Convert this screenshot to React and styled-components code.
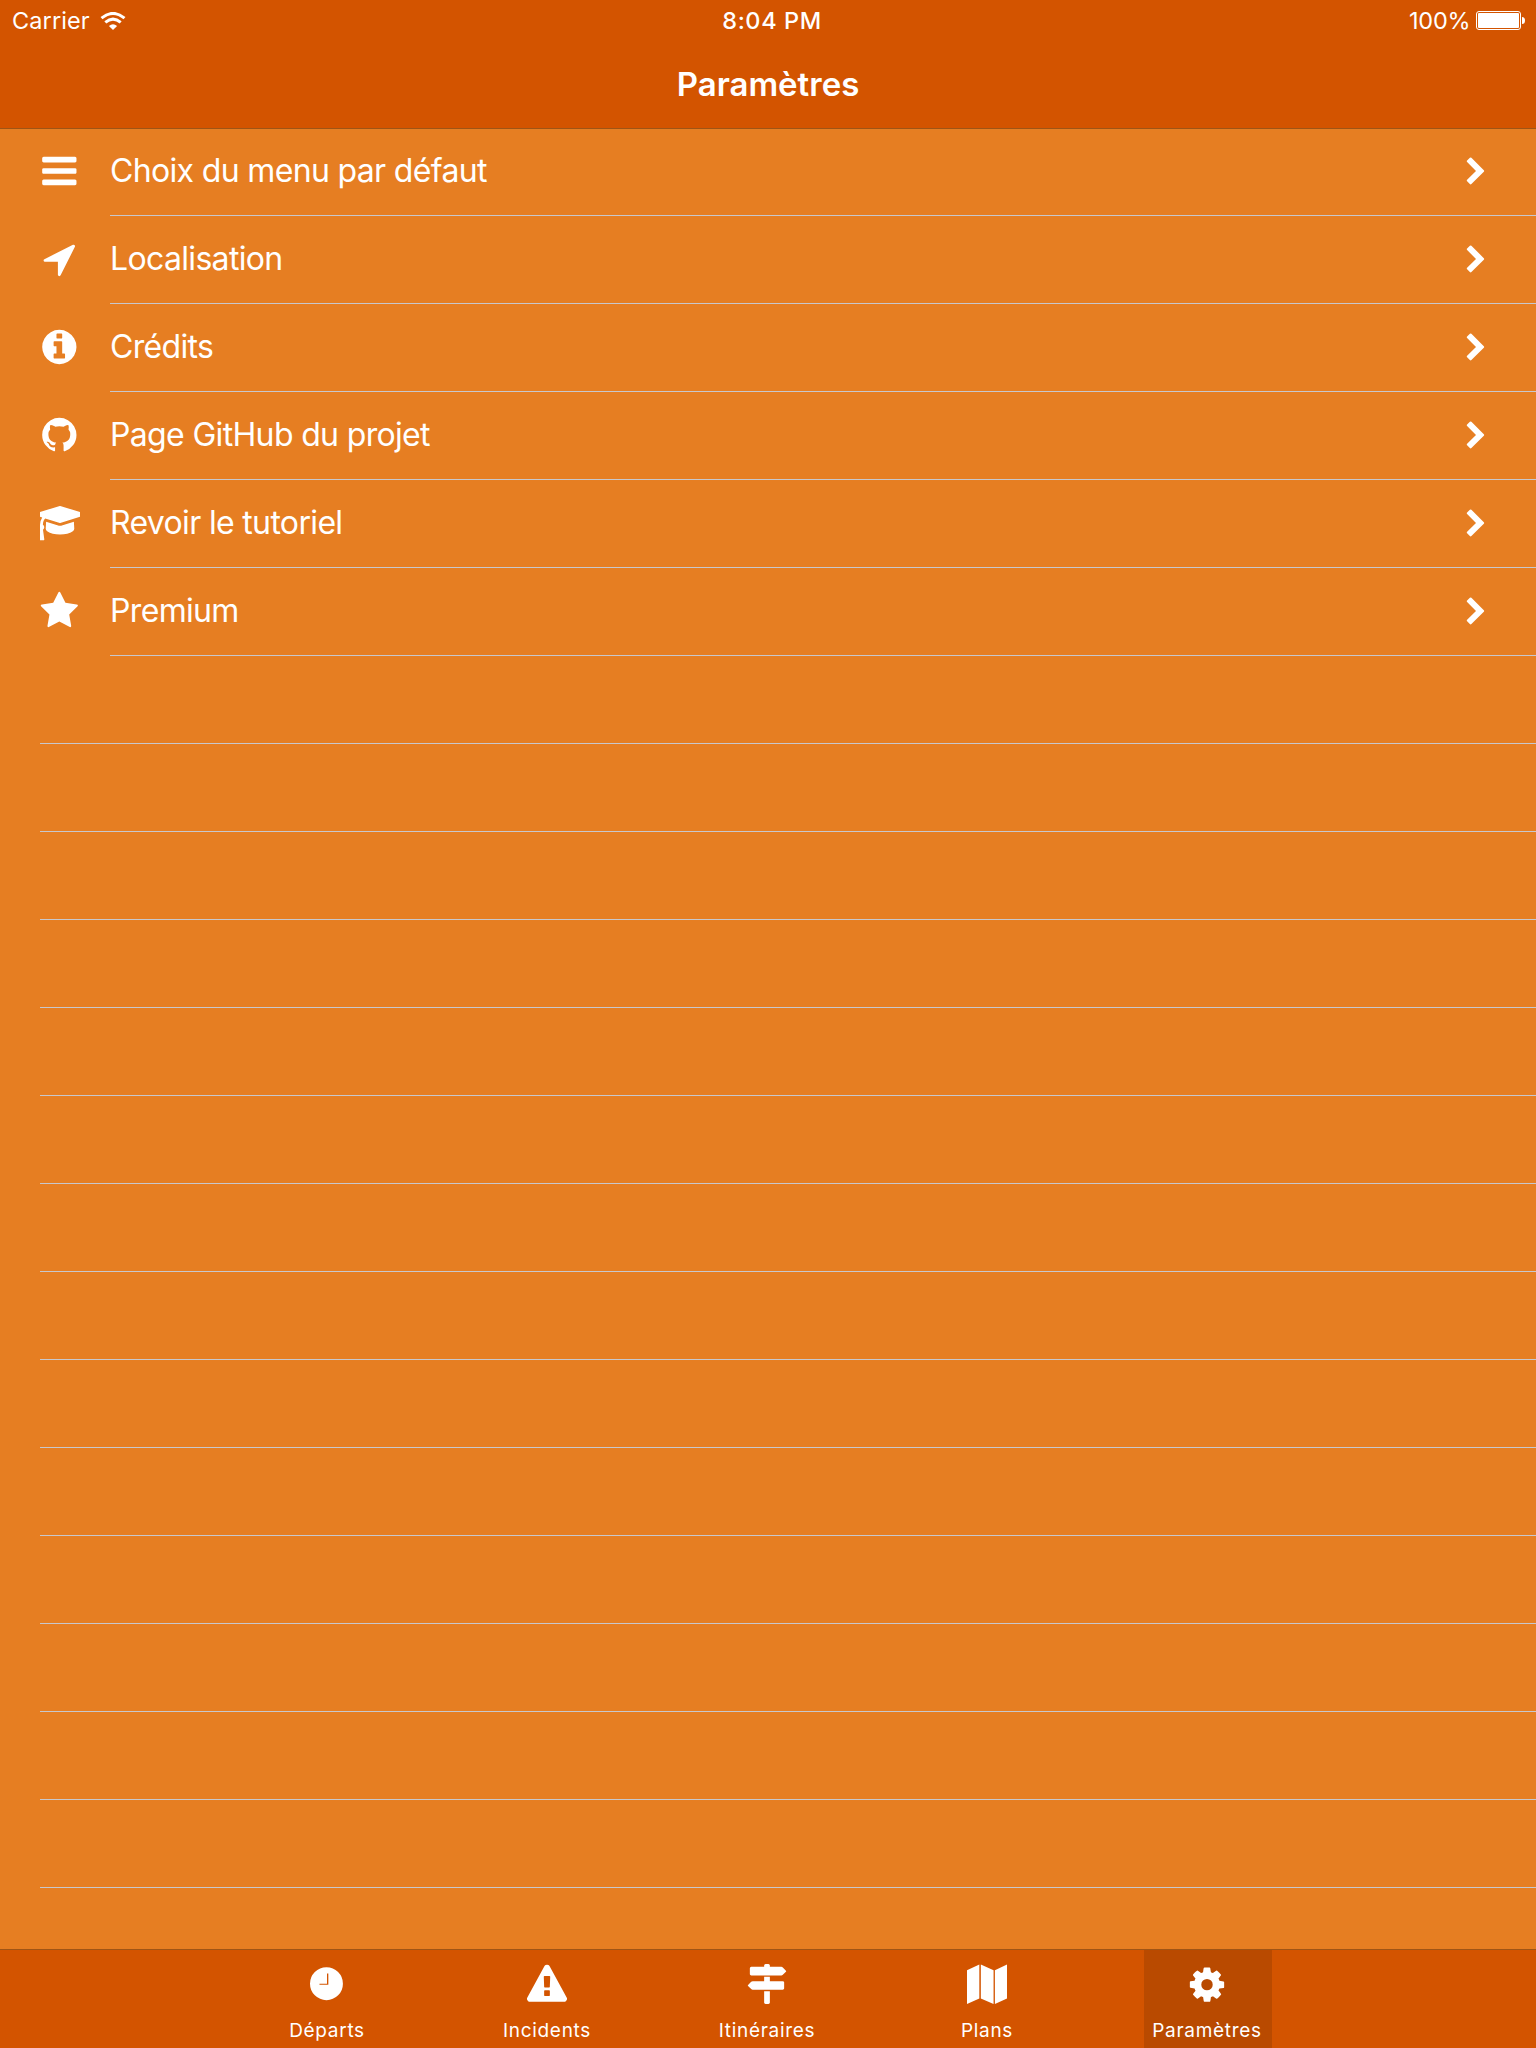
import React from "react";
import styled, { createGlobalStyle } from "styled-components";

const GlobalStyle = createGlobalStyle`
  * { box-sizing: border-box; }
  body { margin: 0; background: #e67e22; font-family: Inter, "Open Sans", "Liberation Sans", sans-serif; color: #fff; }
`;

const ICONS = {
  bars: "M1664 1344v128q0 26-19 45t-45 19h-1408q-26 0-45-19t-19-45v-128q0-26 19-45t45-19h1408q26 0 45 19t19 45zm0-512v128q0 26-19 45t-45 19h-1408q-26 0-45-19t-19-45v-128q0-26 19-45t45-19h1408q26 0 45 19t19 45zm0-512v128q0 26-19 45t-45 19h-1408q-26 0-45-19t-19-45v-128q0-26 19-45t45-19h1408q26 0 45 19t19 45z",
  arrow: "M1593 349l-640 1280q-17 35-57 35-5 0-15-2-22-5-35.5-22.5t-13.5-39.5v-576h-576q-22 0-39.5-13.5t-22.5-35.5 4-42 29-30l1280-640q13-7 29-7 27 0 45 19 15 14 18.5 34.5t-6.5 39.5z",
  info: "M1152 1376v-160q0-14-9-23t-23-9h-96v-512q0-14-9-23t-23-9h-320q-14 0-23 9t-9 23v160q0 14 9 23t23 9h96v320h-96q-14 0-23 9t-9 23v160q0 14 9 23t23 9h448q14 0 23-9t9-23zm-128-896v-160q0-14-9-23t-23-9h-192q-14 0-23 9t-9 23v160q0 14 9 23t23 9h192q14 0 23-9t9-23zm640 416q0 209-103 385.5t-279.5 279.5-385.5 103-385.5-103-279.5-279.5-103-385.5 103-385.5 279.5-279.5 385.5-103 385.5 103 279.5 279.5 103 385.5z",
  github: "M896 128q209 0 385.5 103t279.5 279.5 103 385.5q0 251-146.5 451.5t-378.5 277.5q-27 5-40-7t-13-30q0-3 .5-76.5t.5-134.5q0-97-52-142 57-6 102.5-18t94-39 81-66.5 53-105 20.5-150.5q0-119-79-206 37-91-8-204-28-9-81 11t-92 44l-38 24q-93-26-192-26t-192 26q-16-11-42.5-27t-83.5-38.5-85-13.5q-45 113-8 204-79 87-79 206 0 85 20.5 150t52.5 105 80.5 67 94 39 102.5 18q-39 36-49 103-21 10-45 15t-57 5-65.5-21.5-55.5-62.5q-19-32-48.5-52t-49.5-24l-20-3q-21 0-29 4.5t-5 11.5 9 14 13 12l7 5q22 10 43.5 38t31.5 51l10 23q13 38 44 61.5t67 30 69.5 7 55.5-3.5l23-4q0 38 .5 88.5t.5 54.5q0 18-13 30t-40 7q-232-77-378.5-277.5t-146.5-451.5q0-209 103-385.5t279.5-279.5 385.5-103z",
  cap: "M1774 836l18 316q4 69-82 128t-235 93.5-323 34.5-323-34.5-235-93.5-82-128l18-316 574 181q22 7 48 7t48-7zm530-324q0 23-22 31l-1120 352q-4 1-10 1t-10-1l-652-206q-43 34-71 111.5t-34 178.5q63 36 63 109 0 69-58 107l58 433q2 14-8 25-9 11-24 11h-192q-15 0-24-11-10-11-8-25l58-433q-58-38-58-107 0-73 65-111 11-207 98-330l-333-104q-22-8-22-31t22-31l1120-352q4-1 10-1t10 1l1120 352q22 8 22 31z",
  star: "M1728 647q0 22-26 48l-363 354 86 500q1 7 1 20 0 21-10.5 35.5t-30.5 14.5q-19 0-40-12l-449-236-449 236q-22 12-40 12-21 0-31.5-14.5t-10.5-35.5q0-6 2-20l86-500-364-354q-25-27-25-48 0-37 56-46l502-73 225-455q19-41 49-41t49 41l225 455 502 73q56 9 56 46z",
  chevron: "M1363 877l-742 742q-19 19-45 19t-45-19l-166-166q-19-19-19-45t19-45l531-531-531-531q-19-19-19-45t19-45l166-166q19-19 45-19t45 19l742 742q19 19 19 45t-19 45z",
  clock: "M872 145a737 737 0 1 0 0 1474a737 737 0 1 0 0-1474zm24 276h60v512h-397v-50h337z",
  warning: "M1024 1375v-190q0-14-9.5-23.5t-22.5-9.5h-192q-13 0-22.5 9.5t-9.5 23.5v190q0 14 9.5 23.5t22.5 9.5h192q13 0 22.5-9.5t9.5-23.5zm-2-374l18-459q0-12-10-19-13-11-24-11h-220q-11 0-24 11-10 7-10 21l17 457q0 10 10 16.5t24 6.5h185q14 0 23.5-6.5t10.5-16.5zm-14-934l768 1408q35 63-2 126-17 29-46.5 46t-63.5 17h-1536q-34 0-63.5-17t-46.5-46q-37-63-2-126l768-1408q17-31 47-49t65-18 65 18 47 49z",
  signs: "M1745 297q10 10 10 23t-10 23l-141 141q-28 28-68 28h-1344q-26 0-45-19t-19-45v-256q0-26 19-45t45-19h576v-64q0-26 19-45t45-19h128q26 0 45 19t19 45v64h512q40 0 68 28zm-977 919h256v512q0 26-19 45t-45 19h-128q-26 0-45-19t-19-45v-512zm832-448q26 0 45 19t19 45v256q0 26-19 45t-45 19h-1344q-40 0-68-28l-141-141q-10-10-10-23t10-23l141-141q28-28 68-28h512v-192h256v192h576z",
  map: "M0 280L552 20V1540L0 1792zM620 20L1190 280V1792L620 1540zM1250 280L1792 20V1540L1250 1792z",
  cog: "M1152 896q0-106-75-181t-181-75-181 75-75 181 75 181 181 75 181-75 75-181zm512-109v222q0 12-8 23t-20 13l-185 28q-19 54-39 91 35 50 107 138 10 12 10 25t-9 23q-27 37-99 108t-94 71q-12 0-26-9l-138-108q-44 23-91 38-16 136-29 186-7 28-36 28h-222q-14 0-24.5-8.5t-11.5-21.5l-28-184q-49-16-90-37l-141 107q-10 9-25 9-14 0-25-11-126-114-165-168-7-10-7-23 0-12 8-23 15-21 51-66.5t54-70.5q-27-50-41-99l-183-27q-13-2-21-12.5t-8-23.5v-222q0-12 8-23t19-13l186-28q14-46 39-92-40-57-107-138-10-12-10-24 0-10 9-23 26-36 98.5-107.5t94.5-71.5q13 0 26 10l138 107q44-23 91-38 16-136 29-186 7-28 36-28h222q14 0 24.5 8.5t11.5 21.5l28 184q49 16 90 37l142-107q9-9 24-9 13 0 25 10 129 119 165 170 7 8 7 22 0 12-8 23-15 21-51 66.5t-54 70.5q26 50 41 98l183 28q13 2 21 12.5t8 23.5z",
};

const Svg = styled.svg`
  display: block;
  flex: none;
  width: ${(p) => p.$size}px;
  height: ${(p) => p.$size}px;
  fill: #fff;
`;

function Icon({ name, size = 40, offset = 0, rise = 0 }) {
  return (
    <Svg $size={size} viewBox={`${offset} ${rise} 1792 1792`} aria-hidden="true">
      <path fillRule="evenodd" d={ICONS[name]} />
    </Svg>
  );
}

const Screen = styled.div`
  display: flex;
  flex-direction: column;
  width: 1536px;
  height: 2048px;
  overflow: hidden;
  background: #e67e22;
`;

const Header = styled.header`
  flex: none;
  height: 129px;
  background: #d35400;
  border-bottom: 1px solid #9f5415;
`;

const StatusBar = styled.div`
  display: grid;
  grid-template-columns: 1fr auto 1fr;
  align-items: center;
  height: 40px;
  padding: 2px 10px 0 12px;
  font-size: 23.5px;
  line-height: 38px;
`;

const Carrier = styled.div`
  display: flex;
  align-items: center;
  gap: 10px;
  letter-spacing: 0.1px;
`;

const Clock = styled.div`
  font-weight: 500;
  letter-spacing: 0.6px;
  padding-left: 6px;
`;

const Power = styled.div`
  display: flex;
  justify-content: flex-end;
  align-items: center;
  gap: 5.5px;
  letter-spacing: -0.2px;
`;

const Wifi = styled.svg`
  display: block;
  width: 26px;
  height: 19px;
`;

const Battery = styled.svg`
  display: block;
  width: 50px;
  height: 20px;
`;

const Title = styled.h1`
  margin: 0;
  height: 88px;
  line-height: 88px;
  text-align: center;
  font-size: 33px;
  font-weight: 600;
  letter-spacing: 0;
`;

const List = styled.main`
  flex: 1;
  min-height: 0;
  overflow: hidden;
  margin-top: -1px;
`;

const Row = styled.div`
  display: flex;
  height: 88px;
  padding-left: 40px;
`;

const IconSlot = styled.div`
  width: 70px;
  padding-top: 22.5px;
`;

const RowBody = styled.div`
  flex: 1;
  display: flex;
  justify-content: space-between;
  align-items: center;
  padding-right: 45px;
  border-bottom: 1px solid #c8c7cc;
`;

const Label = styled.span`
  padding-bottom: 1px;
  font-size: 32px;
  line-height: 40px;
  letter-spacing: -0.66px;
`;

const TabBar = styled.nav`
  position: relative;
  z-index: 1;
  flex: none;
  display: flex;
  justify-content: center;
  gap: 92px;
  height: 99px;
  background: #d35400;
  border-top: 1px solid #9f5415;
`;

const Tab = styled.div`
  display: flex;
  flex-direction: column;
  align-items: center;
  width: 128px;
  padding: 14px 2px 0 0;
  background: ${(p) => (p.$active ? "#b94a00" : "transparent")};
`;

const TabLabel = styled.span`
  margin-top: 14px;
  font-size: 19px;
  line-height: 26px;
  letter-spacing: 0.7px;
  white-space: nowrap;
`;

const ROWS = [
  ["bars", "Choix du menu par défaut"],
  ["arrow", "Localisation"],
  ["info", "Crédits"],
  ["github", "Page GitHub du projet"],
  ["cap", "Revoir le tutoriel"],
  ["star", "Premium"],
];

const TABS = [
  ["clock", "Départs"],
  ["warning", "Incidents"],
  ["signs", "Itinéraires"],
  ["map", "Plans"],
  ["cog", "Paramètres"],
];

export default function App() {
  return (
    <>
      <GlobalStyle />
      <Screen>
        <Header>
          <StatusBar>
            <Carrier>
              Carrier
              <Wifi viewBox="0 0 26 19" fill="none" stroke="#fff">
                <path d="M1.5 6.2Q13-3.4 24.5 6.2" strokeWidth="3" />
                <path d="M5.3 10.3Q13 4 20.7 10.3" strokeWidth="3" />
                <path d="M8.9 13.9Q13 10.7 17.1 13.9L13 18z" fill="#fff" stroke="none" />
              </Wifi>
            </Carrier>
            <Clock>8:04 PM</Clock>
            <Power>
              100%
              <Battery viewBox="0 0 50 20">
                <rect x="0.5" y="0.5" width="44" height="18" rx="2.5" fill="none" stroke="#fff" />
                <rect x="2" y="2" width="41" height="15" rx="1" fill="#fff" />
                <path d="M46 6q3 0 3 3.5t-3 3.5z" fill="#fff" />
              </Battery>
            </Power>
          </StatusBar>
          <Title>Paramètres</Title>
        </Header>
        <List>
          {ROWS.map(([icon, text]) => (
            <Row key={icon}>
              <IconSlot>
                <Icon name={icon} offset={icon === "cap" ? 256 : 30} />
              </IconSlot>
              <RowBody>
                <Label>{text}</Label>
                <Icon name="chevron" size={30} />
              </RowBody>
            </Row>
          ))}
          {Array.from({ length: 14 }, (_, i) => (
            <Row key={i}>
              <RowBody />
            </Row>
          ))}
        </List>
        <TabBar>
          {TABS.map(([icon, text]) => (
            <Tab key={icon} $active={icon === "cog"}>
              <Icon name={icon} rise={icon === "warning" || icon === "cog" ? -28 : 0} />
              <TabLabel>{text}</TabLabel>
            </Tab>
          ))}
        </TabBar>
      </Screen>
    </>
  );
}
